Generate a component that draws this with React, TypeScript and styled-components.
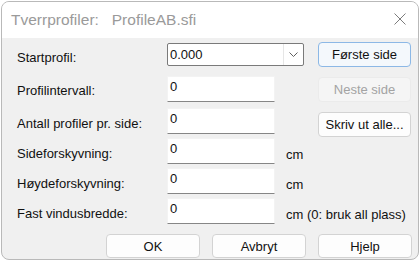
import React from 'react';
import styled, { createGlobalStyle } from 'styled-components';

const GlobalStyle = createGlobalStyle`
  html, body {
    margin: 0;
    padding: 0;
    background: #ffffff;
  }
  body {
    font-family: "Liberation Sans", Arial, sans-serif;
    font-size: 13px;
    color: #111111;
  }
`;

const Screen = styled.div`
  width: 420px;
  height: 262px;
  overflow: hidden;
  background: #ffffff;
  padding: 1px 1px 0 1px;
  box-sizing: border-box;
`;

const Window = styled.div`
  width: 418px;
  height: 259px;
  box-sizing: border-box;
  border: 1px solid #b9b9b9;
  border-radius: 8px;
  overflow: hidden;
  display: flex;
  flex-direction: column;
  background: #f0f0f0;
`;

const TitleBar = styled.div`
  height: 36px;
  flex: none;
  background: #ffffff;
  display: flex;
  align-items: center;
  justify-content: space-between;
  padding: 0 10px 0 9px;
`;

const Title = styled.span`
  font-size: 15.5px;
  color: #9a9a9a;
  white-space: pre;
`;

const CloseIcon = styled.svg`
  width: 12px;
  height: 12px;
  margin-right: 2px;
  margin-top: -2px;
`;

const Body = styled.div`
  flex: 1;
  display: flex;
  flex-direction: column;
  padding: 5px 6px 0 15px;
`;

const Form = styled.div`
  display: grid;
  grid-template-columns: 150px 109px 42px 93px;
  grid-template-rows: 33px 32px 30px 30px 30px 26px;
  align-items: start;
`;

const Label = styled.label<{ $row: number; $top?: number }>`
  grid-column: 1;
  grid-row: ${(p) => p.$row};
  padding-top: ${(p) => p.$top ?? 7}px;
  line-height: 15px;
  white-space: nowrap;
`;

const Combo = styled.div`
  grid-column: 2 / span 2;
  grid-row: 1;
  width: 137px;
  height: 23px;
  box-sizing: border-box;
  border: 1px solid #7a7a7a;
  border-radius: 2px;
  background: #ffffff;
  display: flex;
  align-items: center;
`;

const ComboValue = styled.span`
  flex: 1;
  padding-left: 2px;
  line-height: 15px;
`;

const ComboArrow = styled.div`
  width: 19px;
  height: 100%;
  border-left: 1px solid #e6e6e6;
  display: flex;
  align-items: center;
  justify-content: center;
`;

const Input = styled.div<{ $row: number }>`
  grid-column: 2;
  grid-row: ${(p) => p.$row};
  width: 108px;
  height: 26px;
  box-sizing: border-box;
  background: #ffffff;
  border: 1px solid #f3f3f3;
  border-bottom: 1px solid #868686;
  padding: 2px 0 0 2px;
  line-height: 15px;
`;

const Unit = styled.span<{ $row: number }>`
  grid-column: 3 / span 2;
  grid-row: ${(p) => p.$row};
  padding: 9px 0 0 10px;
  line-height: 15px;
  white-space: nowrap;
`;

const SideButtons = styled.div`
  grid-column: 4;
  grid-row: 1 / span 3;
  margin-top: -1px;
  display: flex;
  flex-direction: column;
  gap: 10px;
`;

const Button = styled.button<{ $variant?: 'default' | 'disabled' }>`
  width: 93px;
  height: 25px;
  box-sizing: border-box;
  border-radius: 4px;
  font-family: inherit;
  font-size: 13px;
  padding: 0;
  border: 1px solid
    ${(p) =>
      p.$variant === 'default' ? '#8cb8e6' : p.$variant === 'disabled' ? '#ebebeb' : '#d3d3d3'};
  background: ${(p) =>
    p.$variant === 'default' ? '#f4f8fc' : p.$variant === 'disabled' ? '#f5f5f5' : '#fdfdfd'};
  color: ${(p) => (p.$variant === 'disabled' ? '#a3a3a3' : '#111111')};
`;

const Footer = styled.div`
  display: flex;
  justify-content: flex-end;
  gap: 12px;
  margin-top: 10px;
`;

const FooterButton = styled(Button)`
  width: 94px;
  height: 24px;
`;

export default function App() {
  return (
    <Screen>
      <GlobalStyle />
      <Window>
        <TitleBar>
          <Title>{'Tverrprofiler:   ProfileAB.sfi'}</Title>
          <CloseIcon viewBox="0 0 12 12">
            <path d="M0.5 0.5 L11.5 11.5 M11.5 0.5 L0.5 11.5" stroke="#7c7c7c" strokeWidth="1" fill="none" />
          </CloseIcon>
        </TitleBar>
        <Body>
          <Form>
            <Label $row={1}>Startprofil:</Label>
            <Combo>
              <ComboValue>0.000</ComboValue>
              <ComboArrow>
                <svg width="9" height="5" viewBox="0 0 9 5">
                  <path d="M0.5 0.5 L4.5 4.5 L8.5 0.5" stroke="#606060" strokeWidth="1" fill="none" />
                </svg>
              </ComboArrow>
            </Combo>
            <SideButtons>
              <Button $variant="default">Første side</Button>
              <Button $variant="disabled">Neste side</Button>
              <Button>Skriv ut alle...</Button>
            </SideButtons>

            <Label $row={2}>Profilintervall:</Label>
            <Input $row={2}>0</Input>

            <Label $row={3} $top={8}>Antall profiler pr. side:</Label>
            <Input $row={3}>0</Input>

            <Label $row={4} $top={8}>Sideforskyvning:</Label>
            <Input $row={4}>0</Input>
            <Unit $row={4}>cm</Unit>

            <Label $row={5} $top={8}>Høydeforskyvning:</Label>
            <Input $row={5}>0</Input>
            <Unit $row={5}>cm</Unit>

            <Label $row={6} $top={8}>Fast vindusbredde:</Label>
            <Input $row={6}>0</Input>
            <Unit $row={6}>cm (0: bruk all plass)</Unit>
          </Form>
          <Footer>
            <FooterButton>OK</FooterButton>
            <FooterButton>Avbryt</FooterButton>
            <FooterButton>Hjelp</FooterButton>
          </Footer>
        </Body>
      </Window>
    </Screen>
  );
}
